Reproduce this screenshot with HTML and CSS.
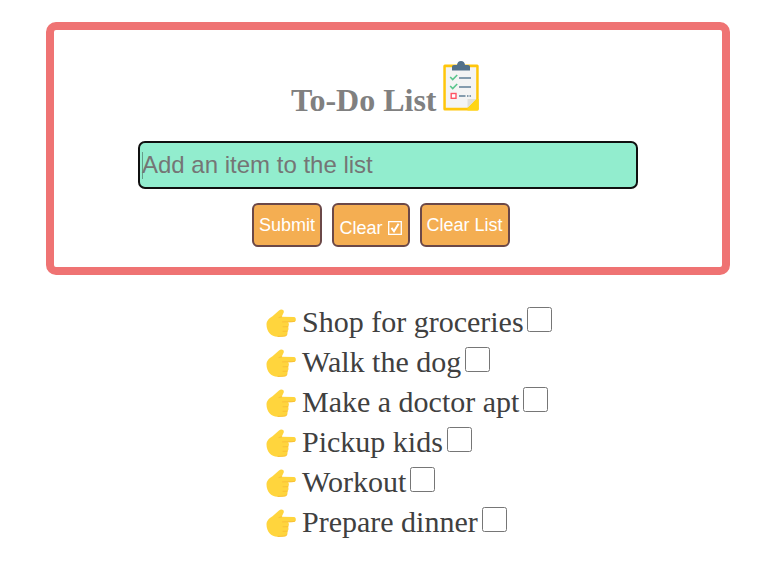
FILE: index.html
```
<!DOCTYPE html>
<html lang="en">
<head>
<meta charset="utf-8">
<title>To-Do List</title>
<link rel="stylesheet" href="styles.css">
</head>
<body>
<svg class="defs" aria-hidden="true">
<symbol id="hand" viewBox="0 0 30 28">
<path fill="#ffd53d" d="M.5 15.500C.5 11.500 3.500 9 6.500 7.200L13 1.500C15.500-.6 18.800 1.200 17.600 3.800L15.700 7.800L28 8C30.400 8.100 30.500 12.700 28 12.900L22 13.200C23.400 14.500 23 17 22 17.700C23 19.500 22.400 21.400 21.400 22C22 25.500 20.500 27.300 17.500 27.400L11.500 27.700C5 27.700 .5 22.500 .5 15.500Z"/>
<path fill="none" stroke="#f8bd35" stroke-width=".9" stroke-linecap="round" d="M29 12Q28.500 12.700 26 12.700L16.500 12.900M22 17.700L17 17.800M21.400 22.200L17 22.300M15.700 7.800L13 8.500M21 25.800Q20.200 27.100 17.500 27.200L12 27.500"/>
</symbol>
</svg>
<main class="panel">
<h1 class="title"><span>To-Do List</span><svg class="clipboard" viewBox="0 0 36 50">
<rect x=".3" y="3.600" width="35.400" height="46" rx="1.500" fill="#ffc60b"/>
<path fill="#f4f4f4" d="M2.800 6.300H33.200V38L24.500 46.800H2.800Z"/>
<path fill="#ffd515" d="M35.700 38H33.200L24.500 46.800V49.600H34.200Q35.700 49.600 35.700 48Z"/>
<path fill="#dfdfda" d="M24.500 38H33.200L24.500 46.800Z"/>
<path fill="#52718a" d="M9 9.600V5.500Q9 4 11 4H14Q14.500 0 18 0T22 4H25Q27 4 27 5.500V9.600Z"/>
<path fill="none" stroke="#59c58c" stroke-width="1.600" d="M7.200 16L9.700 18.500L14.200 14M7.200 25L9.700 27.500L14.200 23"/>
<path fill="none" stroke="#607f96" stroke-width="1.500" d="M16 17H28M16 26H28M16 35H22.500M24 35H25.500M26.500 35H28"/>
<rect x="8.200" y="32.500" width="4.800" height="4.800" fill="#fff" stroke="#ff5364" stroke-width="1.400"/>
</svg></h1>
<div class="field"><span class="caret"></span><span>Add an item to the list</span></div>
<div class="actions">
<button class="btn submit">Submit</button>
<button class="btn checked">Clear <svg class="tick" viewBox="0 0 14 14"><path d="M.7 .7H13.300V13.300H.7Z"/><path class="mark" d="M3.500 6.800L6 10.300L10.600 2.800"/></svg></button>
<button class="btn all">Clear List</button>
</div>
</main>
<ul class="list">
<li><svg class="hand"><use href="#hand"/></svg><span>Shop for groceries</span><input type="checkbox"></li>
<li><svg class="hand"><use href="#hand"/></svg><span>Walk the dog</span><input type="checkbox"></li>
<li><svg class="hand"><use href="#hand"/></svg><span>Make a doctor apt</span><input type="checkbox"></li>
<li><svg class="hand"><use href="#hand"/></svg><span>Pickup kids</span><input type="checkbox"></li>
<li><svg class="hand"><use href="#hand"/></svg><span>Workout</span><input type="checkbox"></li>
<li><svg class="hand"><use href="#hand"/></svg><span>Prepare dinner</span><input type="checkbox"></li>
</ul>
</body>
</html>
```
FILE: styles.css
```
* { box-sizing: border-box; }
body { margin: 0; padding-top: 22px; background: #fff; font-family: "Liberation Serif", serif; }
.defs { display: block; width: 0; height: 0; }
.panel {
  width: 684px; height: 253px; margin-left: 46px; padding: 31px 84px 0;
  border: 8px solid #ef7373; border-radius: 10px;
}
.title {
  display: flex; align-items: flex-start; height: 50px; margin: 0 0 30px 153px;
  color: #808080; font-size: 32px; line-height: 36px; white-space: nowrap;
}
.title span { width: 152px; padding-top: 21px; }
.clipboard { width: 36px; height: 50px; }
.field {
  display: flex; align-items: center; width: 500px; height: 48px; padding-left: 2px;
  border: 2px solid #101010; border-radius: 7px; background: #92edce;
  color: #757575; font: 24px "Liberation Sans", sans-serif;
}
.caret { width: 1px; height: 27px; margin-right: -1px; background: #659c89; }
.actions { display: flex; gap: 10px; margin: 14px 0 0 114px; }
.btn {
  height: 44px; padding: 0; border: 2px solid #6b4848; border-radius: 6px;
  background: #f4ae52; color: #fff; font: 18px "Liberation Sans", sans-serif; white-space: nowrap;
}
.submit { width: 70px; }
.checked { width: 78px; padding: 6px 1px 0 0; }
.all { width: 90px; padding-right: 1px; }
.tick { width: 14px; height: 14px; vertical-align: -1px; fill: none; stroke: #fff; stroke-width: 1.3; }
.mark { stroke-width: 2; }
.list { margin: 27px 0 0 266px; padding: 0; list-style: none; color: #404040; font-size: 30px; line-height: 40px; }
.list li { display: flex; height: 40px; }
.hand { width: 30px; height: 28px; margin: 7px 6px 0 0; }
.list input { width: 25px; height: 25px; margin: 5px 0 0 3.8px; }
```
